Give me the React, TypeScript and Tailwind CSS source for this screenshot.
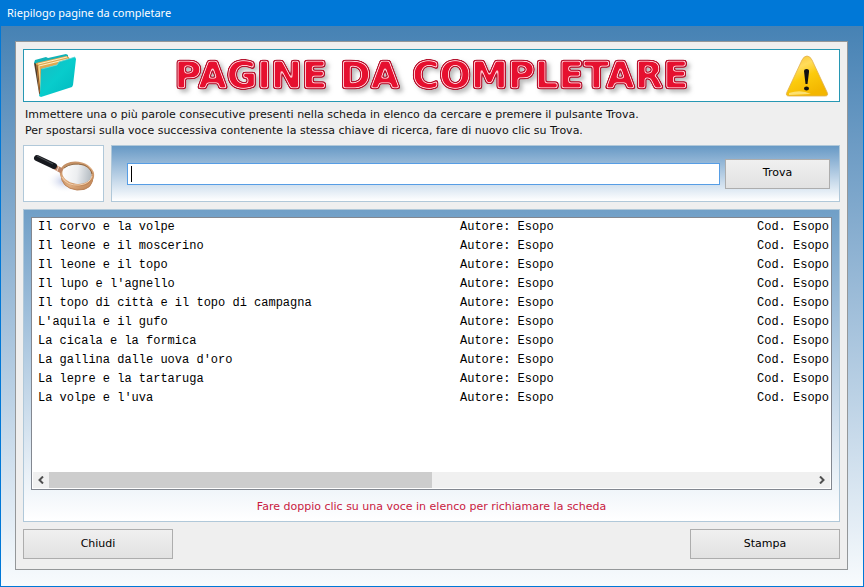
import React from "react";

const entries = [
  "Il corvo e la volpe",
  "Il leone e il moscerino",
  "Il leone e il topo",
  "Il lupo e l'agnello",
  "Il topo di città e il topo di campagna",
  "L'aquila e il gufo",
  "La cicala e la formica",
  "La gallina dalle uova d'oro",
  "La lepre e la tartaruga",
  "La volpe e l'uva",
];

function FolderIcon() {
  return (
    <svg width="44" height="46" viewBox="0 0 44 46" aria-hidden="true">
      <defs>
        <linearGradient id="folder" x1="0" y1="0" x2="1" y2="1">
          <stop offset="0" stopColor="#1cb9c0" />
          <stop offset="0.5" stopColor="#08cccc" />
          <stop offset="1" stopColor="#00b8be" />
        </linearGradient>
      </defs>
      <path d="M0 10 L1 7 L12 4 L14 5 L32 1 L34 2 L34 8 L6 16 L3 14Z" fill="#12b3b8" />
      <path d="M0 10 L5 40 L6 43 L9 40 L8 13Z" fill="#4d3c2b" />
      <path d="M2 10 L32 3 L35 4 L36 8 L8 16 L7 42 L5 38Z" fill="#e0a850" />
      <path d="M4 11 L33 4 M5 13 L34 6" stroke="#fff0c4" strokeWidth="1" />
      <path d="M3 12 L6 40" stroke="#8a4f28" strokeWidth="1" />
      <path d="M5 13 L7 38" stroke="#fbe0a0" strokeWidth="1" />
      <path d="M7 16 L23 12 L25 9 L41 4 L42 6 L39 32 L38 34 L7 44 L5 43 L6 40Z" fill="url(#folder)" />
      <path d="M8 16 L23 12 L25 9 L41 4" stroke="#5ad6d8" strokeWidth="0.8" fill="none" />
    </svg>
  );
}

function WarningIcon() {
  return (
    <svg width="44" height="42" viewBox="0 0 44 42" aria-hidden="true">
      <defs>
        <linearGradient id="warn" x1="0" y1="0" x2="0.5" y2="1">
          <stop offset="0" stopColor="#f8bd20" />
          <stop offset="0.35" stopColor="#ffdc5c" />
          <stop offset="0.6" stopColor="#fccb0d" />
          <stop offset="1" stopColor="#f3b600" />
        </linearGradient>
      </defs>
      <path d="M22 1 Q25 1 27 5 L42 37 Q44 41 40 41 L4 41 Q0 41 2 37 L17 5 Q19 1 22 1Z" fill="url(#warn)" stroke="#e0b050" strokeWidth="0.8" />
      <path d="M4 38 Q16 34 26 39 L4 40Z" fill="#fff0a0" opacity="0.7" />
      <path d="M19 16 Q19 14 21.500 14 Q24.500 14 24 17 L22.500 29 L20.500 29Z" fill="#111" />
      <ellipse cx="21.500" cy="33.500" rx="2.500" ry="2" fill="#111" />
    </svg>
  );
}

function MagnifierIcon() {
  return (
    <svg width="78" height="54" viewBox="0 0 78 54" aria-hidden="true">
      <defs>
        <linearGradient id="rim" x1="0" y1="0" x2="1" y2="1">
          <stop offset="0" stopColor="#b9855a" />
          <stop offset="0.5" stopColor="#e0ad80" />
          <stop offset="1" stopColor="#b77c4c" />
        </linearGradient>
        <linearGradient id="lens" x1="0" y1="0" x2="1" y2="0">
          <stop offset="0" stopColor="#ffffff" />
          <stop offset="0.5" stopColor="#eceef0" />
          <stop offset="1" stopColor="#adb5bc" />
        </linearGradient>
        <radialGradient id="glassShadow">
          <stop offset="0" stopColor="#b4bfe2" />
          <stop offset="1" stopColor="#ffffff" stopOpacity="0" />
        </radialGradient>
      </defs>
      <ellipse cx="40" cy="34" rx="19" ry="12" fill="url(#glassShadow)" />
      <path d="M36 27 Q36 41 52 43 Q69 44 68 27Z" fill="url(#rim)" stroke="#bb8156" strokeWidth="1" />
      <ellipse cx="52" cy="27" rx="16" ry="11" fill="url(#lens)" stroke="url(#rim)" strokeWidth="2.500" transform="rotate(8 52 27)" />
      <path d="M37 30 Q42 39 54 38 Q65 37 67 29" stroke="#f4cfac" strokeWidth="1" fill="none" />
      <path d="M39 21 Q47 15 59 18 Q66 21 67 27" stroke="#8e653f" strokeWidth="1" fill="none" />
      <path d="M28 19 L37 24" stroke="#bd8465" strokeWidth="5" />
      <path d="M30 17 L28 22 M34 19 L32 24" stroke="#f3d4c0" strokeWidth="1" />
      <path d="M12 11 L29 19" stroke="#17191e" strokeWidth="6" strokeLinecap="round" />
      <path d="M12 9 L28 17" stroke="#4c5055" strokeWidth="1" />
    </svg>
  );
}

function TitleFilter() {
  return (
    <svg width="0" height="0" className="absolute" aria-hidden="true">
      <filter id="candy" x="-5%" y="-30%" width="110%" height="170%" colorInterpolationFilters="sRGB">
        <feGaussianBlur in="SourceAlpha" stdDeviation="1.3" result="soft" />
        <feComponentTransfer in="soft" result="core">
          <feFuncA type="linear" slope="5" intercept="-3" />
        </feComponentTransfer>
        <feComponentTransfer in="soft" result="mid">
          <feFuncA type="linear" slope="5" intercept="-1.5" />
        </feComponentTransfer>
        <feComponentTransfer in="soft" result="outer">
          <feFuncA type="linear" slope="10" intercept="-0.6" />
        </feComponentTransfer>
        <feFlood floodColor="#e6102f" />
        <feComposite in2="core" operator="in" result="red" />
        <feFlood floodColor="#ffc8d0" />
        <feComposite in2="mid" operator="in" result="pink" />
        <feFlood floodColor="#b5142f" />
        <feComposite in2="outer" operator="in" result="rim" />
        <feGaussianBlur in="outer" stdDeviation="2" />
        <feOffset dx="3" dy="3" result="cast" />
        <feFlood floodColor="#777777" floodOpacity="0.5" />
        <feComposite in2="cast" operator="in" result="shadow" />
        <feMerge>
          <feMergeNode in="shadow" />
          <feMergeNode in="rim" />
          <feMergeNode in="pink" />
          <feMergeNode in="red" />
        </feMerge>
      </filter>
    </svg>
  );
}

const buttonStyle =
  "border border-[#adadad] bg-linear-to-b from-[#f0f0f0] to-[#e2e2e2] h-[30px] text-center text-black";

export default function App() {
  return (
    <div className="flex min-h-screen flex-col bg-[#0078d7] font-['DejaVu_Sans',Verdana,sans-serif] text-[11px] text-[#111]">
      <TitleFilter />
      <header className="flex h-[26px] items-center px-[7px] font-['Noto_Sans','Segoe_UI',sans-serif] text-[11px] text-white">
        Riepilogo pagine da completare
      </header>
      <main className="mx-px mb-px flex flex-1 flex-col bg-linear-to-b from-[#4682b4] to-[#f8fbfd] pt-[15px] pr-[15px] pb-4 pl-[14px]">
        <div className="flex flex-1 flex-col border border-[#949799] bg-[#efefef] px-[7px] pt-[7px] pb-[10px]">
          <div className="flex h-[53px] items-center justify-between border border-[#2797b3] bg-white px-[10px]">
            <FolderIcon />
            <h1
              className="font-['DejaVu_Sans',Verdana,sans-serif] text-[37px] leading-10 font-bold whitespace-nowrap"
              style={{ filter: "url(#candy)" }}
            >
              PAGINE DA COMPLETARE
            </h1>
            <WarningIcon />
          </div>

          <p className="mt-[5px] px-[2px] leading-4">
            Immettere una o più parole consecutive presenti nella scheda in elenco da cercare e premere il pulsante Trova.
            <br />
            Per spostarsi sulla voce successiva contenente la stessa chiave di ricerca, fare di nuovo clic su Trova.
          </p>

          <div className="mt-[6px] flex h-[57px] gap-[7px]">
            <div className="flex w-[81px] items-center justify-center overflow-hidden border border-[#b0c8d9] bg-white">
              <MagnifierIcon />
            </div>
            <form
              className="flex flex-1 items-center gap-[5px] border border-[#b0c8d9] bg-linear-to-b from-[#6799c5] to-white pr-[9px] pl-[15px]"
              onSubmit={(e) => e.preventDefault()}
            >
              <div className="relative flex flex-1">
                <input
                  aria-label="Parole da cercare"
                  className="h-[22px] w-full border border-[#569de5] bg-white px-1 outline-none"
                />
                <span className="absolute top-[3px] left-1 h-4 w-px bg-black" />
              </div>
              <button type="submit" className={`${buttonStyle} w-[105px]`}>
                Trova
              </button>
            </form>
          </div>

          <section className="mt-[7px] flex flex-1 flex-col border border-[#b0c8d9] bg-linear-to-b from-[#709fc7] to-white px-[7px] pt-[7px]">
            <div className="flex flex-1 flex-col border border-[#828790] bg-white px-px pb-px">
              <div className="flex-1 overflow-hidden">
                <table className="w-full table-fixed font-['Liberation_Mono','Courier_New',monospace] text-xs text-black">
                  <colgroup>
                    <col className="w-[427px]" />
                    <col className="w-[297px]" />
                    <col />
                  </colgroup>
                  <tbody>
                    {entries.map((title) => (
                      <tr key={title} className="h-[19px] whitespace-nowrap">
                        <td className="p-0 pb-px pl-[5px] leading-4">{title}</td>
                        <td className="p-0 pb-px leading-4">Autore: Esopo</td>
                        <td className="overflow-hidden p-0 pb-px leading-4">Cod. Esopo</td>
                      </tr>
                    ))}
                  </tbody>
                </table>
              </div>
              <div className="flex h-4 bg-[#f0f0f0]">
                <button aria-label="Scorri a sinistra" className="flex w-4 items-center justify-center">
                  <svg width="8" height="8" viewBox="0 0 8 8" fill="none" stroke="#505050" strokeWidth="2">
                    <path d="M6 0.500 L2.500 4 L6 7.500" />
                  </svg>
                </button>
                <div className="flex flex-1">
                  <div className="w-1/2 bg-[#cdcdcd]" />
                </div>
                <button aria-label="Scorri a destra" className="flex w-4 items-center justify-center">
                  <svg width="8" height="8" viewBox="0 0 8 8" fill="none" stroke="#505050" strokeWidth="2">
                    <path d="M2 0.500 L5.500 4 L2 7.500" />
                  </svg>
                </button>
              </div>
            </div>
            <p className="pt-[9px] pb-[6px] text-center leading-4 text-[#c8193f]">
              Fare doppio clic su una voce in elenco per richiamare la scheda
            </p>
          </section>

          <footer className="mt-[7px] flex justify-between">
            <button className={`${buttonStyle} w-[150px]`}>Chiudi</button>
            <button className={`${buttonStyle} w-[150px]`}>Stampa</button>
          </footer>
        </div>
      </main>
    </div>
  );
}
